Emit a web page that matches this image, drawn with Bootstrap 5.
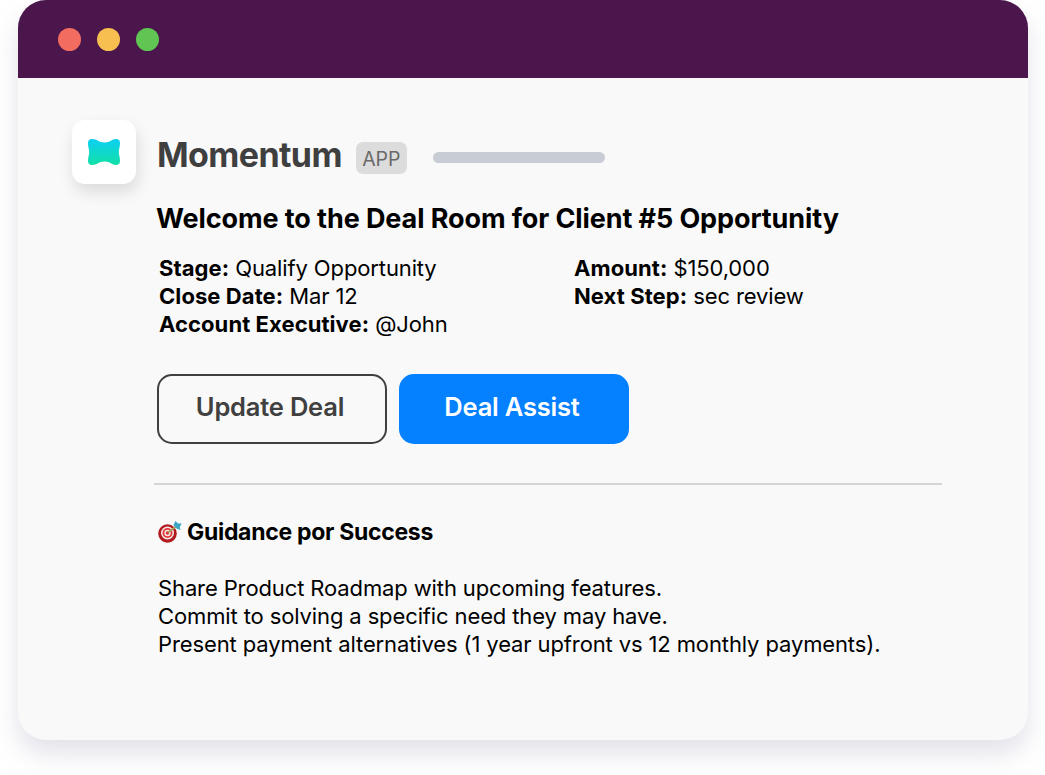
<!DOCTYPE html>
<html lang="en">

<head>
    <meta charset="UTF-8">
    <meta name="viewport" content="width=device-width, initial-scale=1.0">
    <title>Momentum Deal Room</title>
    <link href="https://cdn.jsdelivr.net/npm/bootstrap@5.3.3/dist/css/bootstrap.min.css" rel="stylesheet" crossorigin="anonymous">
    <style>
        body {
            background-color: #fff;
            font-family: "Inter", "Liberation Sans", sans-serif;
            color: #000;
            min-height: 775px;
        }

        .app-window {
            width: 1010px;
            height: 740px;
            margin-left: 18px;
            background-color: #f9f9f9;
            border-radius: 28px;
            box-shadow: 0 14px 24px rgba(185, 187, 205, 0.42);
        }

        .title-bar {
            height: 78px;
            background-color: #4a164b;
            border-radius: 28px 28px 0 0;
            padding-left: 40px;
            gap: 16px;
        }

        .dot {
            width: 23px;
            height: 23px;
            border-radius: 50%;
        }

        .window-body {
            padding: 42px 86px 0 54px;
        }

        .logo-tile {
            width: 64px;
            height: 64px;
            background-color: #fff;
            border-radius: 13px;
            box-shadow: 2px 8px 16px rgba(0, 0, 0, 0.12);
            flex-shrink: 0;
        }

        .main-col {
            margin-left: 21px;
            flex-grow: 1;
        }

        .app-head {
            height: 70px;
            margin-bottom: 13px;
        }

        .app-name {
            font-size: 34px;
            font-weight: 700;
            color: #3f3f3f;
            letter-spacing: -0.6px;
            line-height: 70px;
        }

        .app-tag {
            width: 51px;
            height: 32px;
            margin-left: 14px;
            margin-top: 5px;
            padding-top: 4px;
            background-color: #dcdcdc;
            color: #6a6a6a;
            font-size: 19.5px;
            border-radius: 7px;
        }

        .app-line {
            width: 172px;
            height: 11px;
            margin-left: 26px;
            margin-top: 4px;
            background-color: #c8ccd4;
            border-radius: 6px;
        }

        .deal-title {
            font-size: 27px;
            font-weight: 700;
            line-height: 32px;
            margin: 0 0 19px -1px;
            letter-spacing: -0.1px;
        }

        .deal-facts {
            font-size: 22px;
            line-height: 28px;
            padding-left: 2px;
            letter-spacing: -0.12px;
        }

        .deal-facts b {
            font-weight: 700;
            letter-spacing: 0.08px;
        }

        .facts-left {
            width: 415px;
        }

        .deal-btn {
            width: 230px;
            height: 70px;
            border-radius: 15px;
            padding: 0 4px 4px 0;
            font-size: 25.5px;
            font-weight: 600;
            letter-spacing: -0.2px;
        }

        .btn-update {
            border: 2px solid #404040;
            color: #404040;
            background: transparent;
        }

        .btn-assist {
            border: 0;
            background-color: #0580ff;
            color: #fff;
        }

        .deal-actions {
            margin-top: 36px;
            gap: 12px;
        }

        .deal-rule {
            height: 2px;
            width: 788px;
            margin: 39px 0 0 -3px;
            background-color: #d4d4d4;
        }

        .guidance-title {
            margin-top: 33px;
            font-size: 23px;
            font-weight: 700;
            line-height: 28px;
            gap: 5px;
            padding-left: 1px;
            letter-spacing: -0.3px;
        }

        .guidance-list {
            margin-top: 28px;
            font-size: 22px;
            line-height: 28px;
            padding-left: 1px;
            letter-spacing: -0.12px;
        }
    </style>
</head>

<body>
    <div class="app-window">
        <div class="title-bar d-flex align-items-center">
            <span class="dot" style="background-color:#f26d5f"></span>
            <span class="dot" style="background-color:#f6bf4f"></span>
            <span class="dot" style="background-color:#61c554"></span>
        </div>

        <div class="window-body d-flex align-items-start">
            <div class="logo-tile d-flex align-items-center justify-content-center">
                <svg width="34" height="28" viewBox="0 0 34 28">
                    <defs>
                        <linearGradient id="logoGrad" x1="0" y1="0" x2="0" y2="1">
                            <stop offset="0" stop-color="#0bd0f2" />
                            <stop offset="1" stop-color="#12e0a6" />
                        </linearGradient>
                    </defs>
                    <path fill="url(#logoGrad)" d="M5 1C10 1 12 4.500 17.500 4.500S25 1 29 1C31.500 1 33 2.500 33 5C33 9 31.800 11 31.800 14S33 19 33 23C33 25.500 31.500 27 29 27C25 27 23 23.500 17.500 23.500S10 27 5 27C2.500 27 1 25.500 1 23C1 19 2.200 17 2.200 14S1 9 1 5C1 2.500 2.500 1 5 1Z" />
                </svg>
            </div>

            <div class="main-col">
                <div class="app-head d-flex align-items-center">
                    <span class="app-name">Momentum</span>
                    <span class="app-tag d-flex align-items-center justify-content-center">APP</span>
                    <span class="app-line"></span>
                </div>

                <h1 class="deal-title">Welcome to the Deal Room for Client #5 Opportunity</h1>

                <div class="deal-facts d-flex">
                    <div class="facts-left">
                        <div><b>Stage:</b> Qualify Opportunity</div>
                        <div><b>Close Date:</b> Mar 12</div>
                        <div><b>Account Executive:</b> @John</div>
                    </div>
                    <div>
                        <div><b>Amount:</b> $150,000</div>
                        <div><b>Next Step:</b> sec review</div>
                    </div>
                </div>

                <div class="deal-actions d-flex">
                    <button type="button" class="btn deal-btn btn-update">Update Deal</button>
                    <button type="button" class="btn deal-btn btn-assist">Deal Assist</button>
                </div>

                <div class="deal-rule"></div>

                <div class="guidance-title d-flex align-items-center">
                    <svg width="24" height="24" viewBox="0 0 24 24">
                        <circle cx="9.500" cy="13.500" r="9.300" fill="#b01a20" />
                        <circle cx="9.500" cy="13" r="6.500" fill="#f6ebe4" />
                        <circle cx="9.500" cy="13" r="5" fill="#e5383e" />
                        <circle cx="9.500" cy="13" r="3.200" fill="#f6ebe4" />
                        <circle cx="9.500" cy="13" r="1.800" fill="#e0343a" />
                        <path d="M10 12.500L18 6.500" stroke="#a8a060" stroke-width="1.800" />
                        <path d="M15.500 5L17.500 1L20 3.500L23.800 3.500L21.800 7L22.500 10L18.500 8.500Z" fill="#3ba7c4" />
                    </svg>
                    <span>Guidance por Success</span>
                </div>

                <div class="guidance-list">
                    <div>Share Product Roadmap with upcoming features.</div>
                    <div>Commit to solving a specific need they may have.</div>
                    <div>Present payment alternatives (1 year upfront vs 12 monthly payments).</div>
                </div>
            </div>
        </div>
    </div>

    <script src="https://cdn.jsdelivr.net/npm/bootstrap@5.3.3/dist/js/bootstrap.bundle.min.js" crossorigin="anonymous"></script>
</body>

</html>
